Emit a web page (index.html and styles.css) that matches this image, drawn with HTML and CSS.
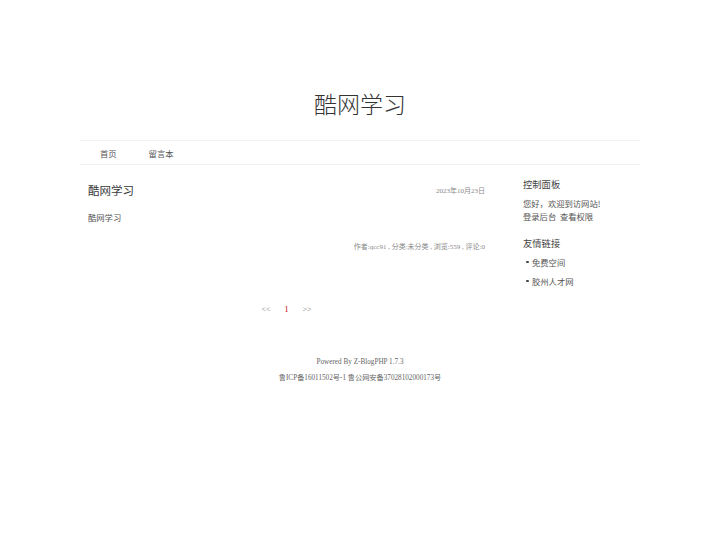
FILE: index.html
```html
<!DOCTYPE html>
<html lang="zh-CN">
<head>
    <meta charset="UTF-8">
    <meta name="viewport" content="width=device-width, initial-scale=1.0">
    <title>酷网学习</title>
    <link rel="stylesheet" href="styles.css">
</head>
<body>
    <div class="site-header">
        <h1 class="site-title">酷网学习</h1>
    </div>

    <div class="wrap">
        <div class="site-nav">
            <a class="nav-item" href="#">首页</a>
            <a class="nav-item" href="#">留言本</a>
        </div>

        <div class="main-area">
            <div class="content-col">
                <div class="post">
                    <div class="post-head">
                        <h2 class="post-title">酷网学习</h2>
                        <span class="post-date">2023年10月23日</span>
                    </div>
                    <div class="post-body">酷网学习</div>
                    <div class="post-meta">作者:qcc91 , 分类:未分类 , 浏览:559 , 评论:0</div>
                </div>

                <div class="pager">
                    <a class="pager-link" href="#">&lt;&lt;</a>
                    <span class="pager-now">1</span>
                    <a class="pager-link" href="#">&gt;&gt;</a>
                </div>
            </div>

            <div class="sidebar">
                <div class="widget">
                    <h3 class="widget-title">控制面板</h3>
                    <div class="widget-text">
                        <p>您好，欢迎到访网站!</p>
                        <p><a href="#">登录后台</a>&nbsp;&nbsp;<a href="#">查看权限</a></p>
                    </div>
                </div>
                <div class="widget">
                    <h3 class="widget-title">友情链接</h3>
                    <ul class="link-list">
                        <li><a href="#">免费空间</a></li>
                        <li><a href="#">胶州人才网</a></li>
                    </ul>
                </div>
            </div>
        </div>
    </div>

    <div class="site-footer">
        <p>Powered By Z-BlogPHP 1.7.3</p>
        <p>鲁ICP备16011502号-1 鲁公网安备37028102000173号</p>
    </div>
</body>
</html>
```

FILE: styles.css
```css
* {
    margin: 0;
    padding: 0;
    box-sizing: border-box;
}

body {
    background: #fff;
    color: #444;
    font-family: "Noto Sans CJK SC", "Noto Sans", sans-serif;
}

a {
    color: inherit;
    text-decoration: none;
}

/* header */
.site-header {
    padding-top: 88px;
    padding-bottom: 22px;
    text-align: center;
}

.site-title {
    font-size: 23px;
    line-height: 30px;
    font-weight: 300;
    color: #333;
}

.wrap {
    width: 560px;
    margin: 0 auto;
}

/* nav */
.site-nav {
    height: 25px;
    border-top: 1px solid #f3f3f3;
    border-bottom: 1px solid #f0f0f0;
    display: flex;
    align-items: center;
    padding-left: 20px;
    gap: 32px;
}

.nav-item {
    font-size: 8.3px;
    color: #555;
    line-height: 12px;
}

/* main */
.main-area {
    display: flex;
}

.content-col {
    width: 405px;
    padding-left: 8px;
}

.post-head {
    display: flex;
    justify-content: space-between;
    align-items: center;
    margin-top: 16px;
    height: 18px;
}

.post-title {
    font-size: 11.5px;
    font-weight: normal;
    color: #3a3a3a;
    line-height: 18px;
}

.post-date {
    font-family: "Liberation Serif", "Noto Sans CJK SC", serif;
    font-size: 7px;
    color: #888;
}

.post-body {
    margin-top: 12px;
    font-size: 8.3px;
    line-height: 12px;
    color: #555;
}

.post-meta {
    margin-top: 18px;
    text-align: right;
    font-family: "Liberation Serif", "Noto Sans CJK SC", serif;
    font-size: 7px;
    line-height: 12px;
    color: #888;
}

.pager {
    margin-top: 51px;
    display: flex;
    justify-content: center;
    gap: 14px;
    font-family: "Liberation Serif", serif;
    font-size: 8px;
    line-height: 12px;
    color: #777;
}

.pager-now {
    color: #b00;
}

/* sidebar */
.sidebar {
    margin-left: 38px;
    width: 117px;
}

.widget-title {
    font-size: 9.3px;
    font-weight: normal;
    line-height: 14px;
    color: #444;
    margin-top: 12px;
}

.widget + .widget .widget-title {
    margin-top: 13.5px;
}

.widget-text {
    margin-top: 5.5px;
    font-size: 8.3px;
    line-height: 13px;
    color: #555;
}

.link-list {
    list-style: none;
    margin-top: 5.5px;
}

.link-list li {
    display: flex;
    align-items: center;
    font-size: 8.3px;
    line-height: 13px;
    color: #555;
    margin-bottom: 6px;
    padding-left: 3px;
}

.link-list li::before {
    content: "";
    width: 2.5px;
    height: 2.5px;
    border-radius: 50%;
    background: #444;
    margin-right: 3.5px;
}

/* footer */
.site-footer {
    margin-top: 38px;
    text-align: center;
    font-family: "Liberation Serif", "Noto Sans CJK SC", serif;
    font-size: 7.2px;
    line-height: 16px;
    color: #666;
}
```
